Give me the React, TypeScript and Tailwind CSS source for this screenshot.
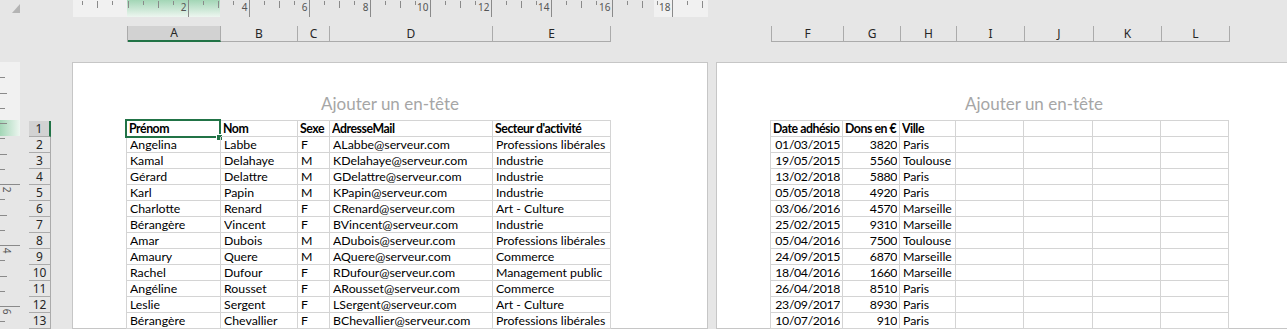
import React from 'react';

const page1Widths = [94, 77, 32, 163, 118];
const page1Rows: string[][] = [
  ['Prénom', 'Nom', 'Sexe', 'AdresseMail', "Secteur d'activité"],
  ['Angelina', 'Labbe', 'F', 'ALabbe@serveur.com', 'Professions libérales'],
  ['Kamal', 'Delahaye', 'M', 'KDelahaye@serveur.com', 'Industrie'],
  ['Gérard', 'Delattre', 'M', 'GDelattre@serveur.com', 'Industrie'],
  ['Karl', 'Papin', 'M', 'KPapin@serveur.com', 'Industrie'],
  ['Charlotte', 'Renard', 'F', 'CRenard@serveur.com', 'Art - Culture'],
  ['Bérangère', 'Vincent', 'F', 'BVincent@serveur.com', 'Industrie'],
  ['Amar', 'Dubois', 'M', 'ADubois@serveur.com', 'Professions libérales'],
  ['Amaury', 'Quere', 'M', 'AQuere@serveur.com', 'Commerce'],
  ['Rachel', 'Dufour', 'F', 'RDufour@serveur.com', 'Management public'],
  ['Angéline', 'Rousset', 'F', 'ARousset@serveur.com', 'Commerce'],
  ['Leslie', 'Sergent', 'F', 'LSergent@serveur.com', 'Art - Culture'],
  ['Bérangère', 'Chevallier', 'F', 'BChevallier@serveur.com', 'Professions libérales'],
];

const page2Widths = [72, 57, 56, 68, 69, 68, 68];
const page2Rows: string[][] = [
  ['Date adhésion', 'Dons en €', 'Ville'],
  ['01/03/2015', '3820', 'Paris'],
  ['19/05/2015', '5560', 'Toulouse'],
  ['13/02/2018', '5880', 'Paris'],
  ['05/05/2018', '4920', 'Paris'],
  ['03/06/2016', '4570', 'Marseille'],
  ['25/02/2015', '9310', 'Marseille'],
  ['05/04/2016', '7500', 'Toulouse'],
  ['24/09/2015', '6870', 'Marseille'],
  ['18/04/2016', '1660', 'Marseille'],
  ['26/04/2018', '8510', 'Paris'],
  ['23/09/2017', '8930', 'Paris'],
  ['10/07/2016', '910', 'Paris'],
];

const headers1 = [
  { l: 'A', w: 'w-[93px]' },
  { l: 'B', w: 'w-[77px]' },
  { l: 'C', w: 'w-[32px]' },
  { l: 'D', w: 'w-[163px]' },
  { l: 'E', w: 'w-[118px]' },
];
const headers2 = [
  { l: 'F', w: 'w-[72px]' },
  { l: 'G', w: 'w-[57px]' },
  { l: 'H', w: 'w-[56px]' },
  { l: 'I', w: 'w-[68px]' },
  { l: 'J', w: 'w-[69px]' },
  { l: 'K', w: 'w-[68px]' },
  { l: 'L', w: 'w-[68px]' },
];

function TopRuler() {
  const origin = 54.5;
  const step = 15.125;
  const marks: React.ReactNode[] = [];
  for (let i = -3; i <= 39; i++) {
    const x = Math.round(origin + i * step) + 0.5;
    if (x < 1 || x > 634) continue;
    if (i > 0 && i % 4 === 0) {
      marks.push(<line key={'l' + i} x1={x} y1={0} x2={x} y2={17} stroke="#8a8a8a" />);
      marks.push(
        <text key={'t' + i} x={x - 2} y={11} fontSize={10} fill="#555" textAnchor="end" fontFamily="'Noto Sans', sans-serif">
          {i / 2}
        </text>
      );
    } else if (i % 2 === 0) {
      marks.push(<line key={'l' + i} x1={x} y1={1} x2={x} y2={8} stroke="#8a8a8a" />);
    } else {
      marks.push(<line key={'l' + i} x1={x} y1={1} x2={x} y2={5} stroke="#8a8a8a" />);
    }
  }
  return (
    <svg width={635} height={17} className="block shrink-0">
      <defs>
        <linearGradient id="tg" x1="0" y1="0" x2="0" y2="1">
          <stop offset="0" stopColor="#a3d6b6" />
          <stop offset="1" stopColor="#edf6f0" />
        </linearGradient>
      </defs>
      <rect x={0} y={0} width={54} height={17} fill="#f1f1f1" />
      <rect x={581} y={0} width={54} height={17} fill="#f1f1f1" />
      <rect x={54} y={0} width={93} height={17} fill="url(#tg)" />
      {marks}
    </svg>
  );
}

function SideRuler() {
  const origin = 61;
  const step = 15.25;
  const marks: React.ReactNode[] = [];
  for (let k = -3; k <= 14; k++) {
    const y = Math.round(origin + k * step) + 0.5;
    if (y < 2 || y > 266) continue;
    if (k > 0 && k % 4 === 0) {
      marks.push(<line key={'l' + k} x1={0} y1={y} x2={20} y2={y} stroke="#8a8a8a" />);
      marks.push(
        <text
          key={'t' + k}
          x={6}
          y={y + 8}
          fontSize={10}
          fill="#555"
          textAnchor="middle"
          fontFamily="'Noto Sans', sans-serif"
          transform={`rotate(90 6 ${y + 5})`}
        >
          {k / 2}
        </text>
      );
    } else if (k % 2 === 0) {
      marks.push(<line key={'l' + k} x1={0} y1={y} x2={7} y2={y} stroke="#8a8a8a" />);
    } else {
      marks.push(<line key={'l' + k} x1={0} y1={y} x2={5} y2={y} stroke="#8a8a8a" />);
    }
  }
  return (
    <svg width={20} height={267} className="block shrink-0">
      <defs>
        <linearGradient id="sg" x1="0" y1="0" x2="1" y2="0">
          <stop offset="0" stopColor="#a3d6b6" />
          <stop offset="1" stopColor="#edf6f0" />
        </linearGradient>
      </defs>
      <rect x={0} y={0} width={20} height={58} fill="#f1f1f1" />
      <rect x={0} y={58} width={20} height={16} fill="url(#sg)" />
      {marks}
    </svg>
  );
}

function Sheet({ rows, widths, rightCols, selected }: { rows: string[][]; widths: number[]; rightCols: number[]; selected?: boolean }) {
  return (
    <div className="border-l border-t border-[#d4d4d4] flex flex-col w-fit">
      {rows.map((row, ri) => (
        <div key={ri} className="flex">
          {widths.map((w, ci) => {
            const txt = row[ci] ?? '';
            const right = ri > 0 && rightCols.includes(ci);
            return (
              <div
                key={ci}
                style={{ width: w }}
                className={
                  'relative h-4 shrink-0 border-r border-b border-[#d4d4d4] leading-[15px] whitespace-nowrap ' +
                  (ri === 0 ? 'font-bold px-[2px] tracking-[-0.45px] ' : 'px-[3px] ') +
                  (right ? 'text-right tracking-[-0.35px] pr-[2px] ' : '')
                }
              >
                <div className="overflow-hidden">{txt}</div>
                {selected && ri === 0 && ci === 0 && (
                  <>
                    <div className="absolute left-[-2px] top-[-2px] w-[96px] h-[19px] border-2 border-[#217346]" />
                    <div className="absolute left-[89px] top-[13px] w-[7px] h-[7px] bg-[#217346] border border-white" />
                  </>
                )}
              </div>
            );
          })}
        </div>
      ))}
    </div>
  );
}

function Page({ children }: { children: React.ReactNode }) {
  return (
    <div className="w-[636px] shrink-0 bg-white border border-[#c6c6c6] flex flex-col">
      <div className="pt-[31px] h-[51px] text-center text-[17px] leading-[20px] text-[#a6a6a6]">Ajouter un en-tête</div>
      <div className="mt-[6px] pl-[53px] text-[12.3px] text-black font-['Lato',sans-serif]">{children}</div>
    </div>
  );
}

export default function App() {
  return (
    <div className="w-[1287px] h-[329px] overflow-hidden bg-[#e6e6e6] flex flex-col font-['Lato','Liberation_Sans',sans-serif]">
      <div className="h-[17px] flex shrink-0">
        <div className="w-[73px] shrink-0">
          <svg width={22} height={15} className="block">
            <polygon points="20,4 20,13 12,13" fill="#b4b4b4" />
          </svg>
        </div>
        <TopRuler />
      </div>
      <div className="h-[9px] shrink-0" />
      <div className="h-[16px] flex shrink-0 font-['Noto_Sans',sans-serif] text-[12px] text-[#262626]">
        <div className="w-[127px] shrink-0" />
        <div className="flex border-l border-[#ababab]">
          {headers1.map((h, i) => (
            <div
              key={h.l}
              className={
                h.w +
                ' h-full shrink-0 flex items-center justify-center border-r border-[#ababab] ' +
                (i === 0 ? 'bg-[#d2d2d2] border-b-2 border-b-[#217346]' : 'border-b')
              }
            >
              {h.l}
            </div>
          ))}
        </div>
        <div className="w-[160px] shrink-0" />
        <div className="flex border-l border-[#ababab]">
          {headers2.map((h) => (
            <div key={h.l} className={h.w + ' h-full shrink-0 flex items-center justify-center border-r border-b border-[#ababab]'}>
              {h.l}
            </div>
          ))}
        </div>
      </div>
      <div className="h-[20px] shrink-0" />
      <div className="flex flex-1 min-h-0">
        <SideRuler />
        <div className="w-[9px] shrink-0" />
        <div className="w-[22px] shrink-0 pt-[59px] flex flex-col font-['Noto_Sans',sans-serif] text-[12px] text-[#262626]">
          {page1Rows.map((_, i) => (
            <div
              key={i}
              className={
                'h-4 shrink-0 flex items-center justify-center border-b border-[#ababab] leading-none ' +
                (i === 0 ? 'bg-[#d2d2d2] border-r-2 border-r-[#217346]' : 'border-r')
              }
            >
              {i + 1}
            </div>
          ))}
        </div>
        <div className="w-[21px] shrink-0" />
        <Page>
          <Sheet rows={page1Rows} widths={page1Widths} rightCols={[]} selected />
        </Page>
        <div className="w-[8px] shrink-0" />
        <Page>
          <Sheet rows={page2Rows} widths={page2Widths} rightCols={[0, 1]} />
        </Page>
      </div>
    </div>
  );
}
